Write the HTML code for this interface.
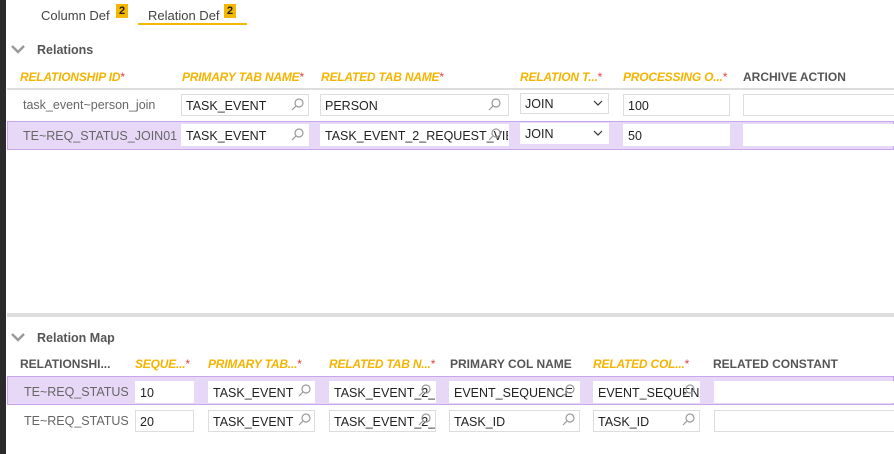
<!DOCTYPE html>
<html><head><style>
*{margin:0;padding:0;box-sizing:border-box}
body{width:894px;height:454px;background:#fff;font-family:"Liberation Sans",sans-serif;position:relative;overflow:hidden;color:#222}
.a{position:absolute;white-space:nowrap}
.h{font-size:12px;font-weight:bold;font-style:italic;color:#f5b400;letter-spacing:-0.2px}
.h i{color:#e04040;font-style:normal;font-weight:normal}
.g{font-size:12px;font-weight:bold;color:#555}
.in{position:absolute;background:#fff;border:1px solid #ddd;font-size:12.5px;color:#222;padding:4px 4px 0;overflow:hidden;white-space:nowrap}
.badge{position:absolute;background:#f5b800;color:#222;font-size:11px;font-weight:bold;width:12px;height:14px;text-align:center;line-height:14px}
.row{position:absolute;left:7px;right:0}
.sel{background:#e8d8f8;border:1px solid #c9a5ec}
.cell{position:absolute;font-size:12.5px;color:#666}
svg.s{position:absolute}
</style></head><body>
<div class="a" style="left:0;top:0;width:6px;height:454px;background:#2b2b2b"></div>
<div class="a" style="left:41px;top:8px;font-size:13px;color:#444">Column Def</div>
<div class="badge" style="left:116px;top:4px">2</div>
<div class="a" style="left:148px;top:8px;font-size:13px;color:#444">Relation Def</div>
<div class="badge" style="left:224px;top:4px">2</div>
<div class="a" style="left:138px;top:23px;width:109px;height:2px;background:#f5b800"></div>

<svg class="s" style="left:11px;top:45px" width="14" height="9"><path d="M1 1L7 7L13 1" stroke="#999" stroke-width="2.5" fill="none"/></svg>
<div class="a g" style="left:37px;top:43px;font-size:12.5px">Relations</div>

<div class="a h" style="left:20px;top:70px">RELATIONSHIP ID<i>*</i></div>
<div class="a h" style="left:182px;top:70px">PRIMARY TAB NAME<i>*</i></div>
<div class="a h" style="left:321px;top:70px">RELATED TAB NAME<i>*</i></div>
<div class="a h" style="left:520px;top:70px">RELATION T...<i>*</i></div>
<div class="a h" style="left:623px;top:70px">PROCESSING O...<i>*</i></div>
<div class="a g" style="left:743px;top:70px">ARCHIVE ACTION</div>
<div class="a" style="left:7px;top:88px;right:0;height:2px;background:#ddd"></div>

<div class="row" style="top:90px;height:31px"></div>
<div class="cell" style="left:23px;top:98px">task_event~person_join</div>
<div class="in" style="left:181px;top:94px;width:128px;height:22px">TASK_EVENT</div>
<div class="in" style="left:320px;top:94px;width:189px;height:22px">PERSON</div>
<div class="in" style="left:520px;top:93px;width:89px;height:21px;padding-top:3px">JOIN</div>
<div class="in" style="left:623px;top:94px;width:107px;height:22px">100</div>
<div class="in" style="left:743px;top:94px;width:160px;height:22px"></div>

<div class="row sel" style="top:121px;height:29px"></div>
<div class="cell" style="left:23px;top:129px">TE~REQ_STATUS_JOIN01</div>
<div class="in" style="left:181px;top:124px;width:128px;height:22px;border-color:#fff">TASK_EVENT</div>
<div class="in" style="left:320px;top:124px;width:189px;height:22px;border-color:#fff">TASK_EVENT_2_REQUEST_VIEW</div>
<div class="in" style="left:520px;top:123px;width:89px;height:21px;padding-top:3px;border-color:#fff">JOIN</div>
<div class="in" style="left:623px;top:124px;width:107px;height:22px;border-color:#fff">50</div>
<div class="in" style="left:743px;top:124px;width:160px;height:22px;border-color:#fff"></div>

<div class="a" style="left:7px;top:313px;right:0;height:4px;background:#ddd"></div>

<svg class="s" style="left:11px;top:333px" width="14" height="9"><path d="M1 1L7 7L13 1" stroke="#999" stroke-width="2.5" fill="none"/></svg>
<div class="a g" style="left:37px;top:331px;font-size:12.5px">Relation Map</div>

<div class="a g" style="left:20px;top:357px">RELATIONSHI...</div>
<div class="a h" style="left:135px;top:357px">SEQUE...<i>*</i></div>
<div class="a h" style="left:208px;top:357px">PRIMARY TAB...<i>*</i></div>
<div class="a h" style="left:329px;top:357px">RELATED TAB N...<i>*</i></div>
<div class="a g" style="left:450px;top:357px">PRIMARY COL NAME</div>
<div class="a h" style="left:593px;top:357px">RELATED COL...<i>*</i></div>
<div class="a g" style="left:713px;top:357px">RELATED CONSTANT</div>

<div class="row sel" style="top:376px;height:29px"></div>
<div class="cell" style="left:24px;top:385px">TE~REQ_STATUS</div>
<div class="in" style="left:135px;top:381px;width:59px;height:22px;border-color:#fff">10</div>
<div class="in" style="left:208px;top:381px;width:107px;height:22px;border-color:#fff">TASK_EVENT</div>
<div class="in" style="left:329px;top:381px;width:107px;height:22px;border-color:#fff">TASK_EVENT_2_REQUEST</div>
<div class="in" style="left:449px;top:381px;width:131px;height:22px;border-color:#fff">EVENT_SEQUENCE</div>
<div class="in" style="left:593px;top:381px;width:107px;height:22px;border-color:#fff">EVENT_SEQUENCE</div>
<div class="in" style="left:714px;top:381px;width:190px;height:22px;border-color:#fff"></div>

<div class="cell" style="left:24px;top:414px">TE~REQ_STATUS</div>
<div class="in" style="left:135px;top:410px;width:59px;height:22px">20</div>
<div class="in" style="left:208px;top:410px;width:107px;height:22px">TASK_EVENT</div>
<div class="in" style="left:329px;top:410px;width:107px;height:22px">TASK_EVENT_2_REQUEST</div>
<div class="in" style="left:449px;top:410px;width:131px;height:22px">TASK_ID</div>
<div class="in" style="left:593px;top:410px;width:107px;height:22px">TASK_ID</div>
<div class="in" style="left:714px;top:410px;width:190px;height:22px"></div>

<svg class="s" style="left:0;top:0" width="894" height="454">
<g stroke="#999" stroke-width="1.2" fill="none">
<g id="m"><circle cx="299" cy="103" r="4"/><path d="M296 106L292 110"/></g>
<use href="#m" x="197" y="0"/>
<use href="#m" x="0" y="30"/>
<use href="#m" x="197" y="30"/>
<use href="#m" x="7" y="286"/>
<use href="#m" x="127" y="286"/>
<use href="#m" x="271" y="286"/>
<use href="#m" x="391" y="286"/>
<use href="#m" x="7" y="315"/>
<use href="#m" x="127" y="315"/>
<use href="#m" x="271" y="315"/>
<use href="#m" x="391" y="315"/>
<path d="M594 101L598 105L602 101" stroke="#333"/>
<path d="M594 131L598 135L602 131" stroke="#333"/>
</g>
</svg>
</body></html>
